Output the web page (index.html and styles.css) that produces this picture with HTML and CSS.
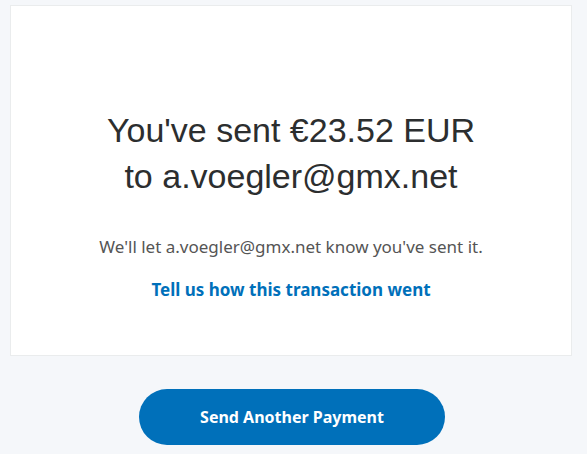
FILE: index.html
```html
<!DOCTYPE html>
<html>
<head>
<meta charset="utf-8">
<link rel="stylesheet" href="styles.css">
</head>
<body>
<main class="page">
  <section class="card">
    <h1 class="title">You've sent €23.52 EUR<br>to a.voegler@gmx.net</h1>
    <p class="note">We'll let a.voegler@gmx.net know you've sent it.</p>
    <a class="feedback" href="#">Tell us how this transaction went</a>
  </section>
  <div class="actions">
    <button class="primary">Send Another Payment</button>
  </div>
</main>
</body>
</html>
```

FILE: styles.css
```css
html, body {
  margin: 0;
  padding: 0;
  background: #f5f7fa;
}
.page {
  padding: 5px 15px 0 10px;
  font-family: "Noto Sans", sans-serif;
}
.card {
  background: #fff;
  border: 1px solid #eaeced;
  height: 351px;
  box-sizing: border-box;
  display: flex;
  flex-direction: column;
  align-items: center;
  padding-top: 101px;
}
.title {
  margin: 0;
  font-family: "Liberation Sans", Arial, sans-serif;
  font-weight: 400;
  font-size: 34px;
  line-height: 46px;
  color: #2c2e2f;
  text-align: center;
}
.note {
  margin: 36px 0 0;
  font-size: 17px;
  line-height: 24px;
  color: #555;
}
.feedback {
  margin-top: 19px;
  font-size: 17px;
  font-weight: 700;
  line-height: 24px;
  color: #0070ba;
  text-decoration: none;
}
.actions {
  display: flex;
  justify-content: center;
  padding-top: 33px;
  padding-left: 2px;
}
.primary {
  width: 306px;
  height: 56px;
  border: 0;
  border-radius: 28px;
  background: #0070ba;
  color: #fff;
  font-family: "Noto Sans", sans-serif;
  font-size: 16px;
  font-weight: 700;
}
```
